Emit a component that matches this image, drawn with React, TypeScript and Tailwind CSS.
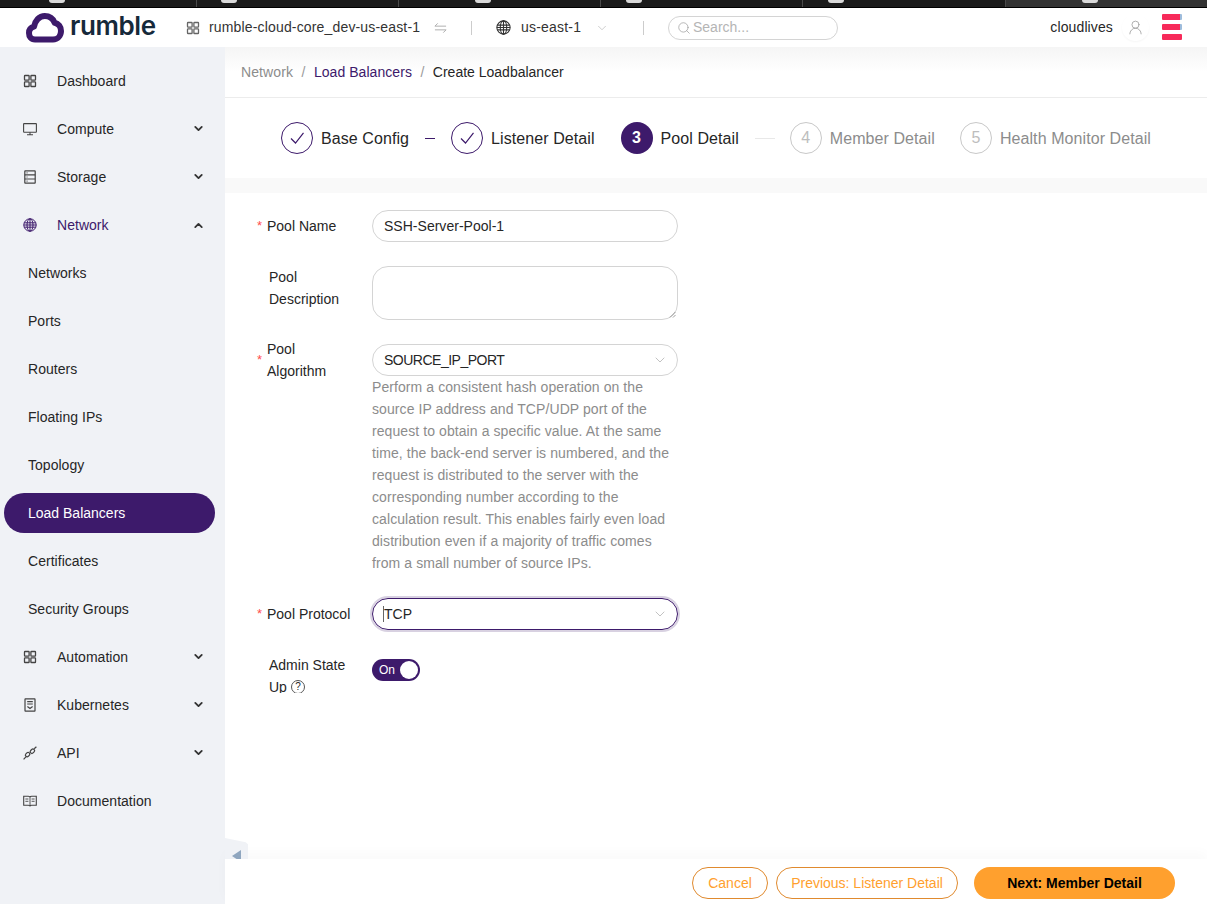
import React from "react";
import { ChevronDown, ChevronUp, Search, UserRound } from "lucide-react";

const Grid = ({ c = "" }: { c?: string }) => (
  <svg viewBox="0 0 14 14" className={c} fill="none" stroke="currentColor" strokeWidth="1.3">
    <rect x="1.5" y="1.5" width="4.6" height="4.6" rx=".6" />
    <rect x="7.9" y="1.5" width="4.6" height="4.6" rx=".6" />
    <rect x="1.5" y="7.9" width="4.6" height="4.6" rx=".6" />
    <rect x="7.9" y="7.9" width="4.6" height="4.6" rx=".6" />
  </svg>
);
const Monitor = ({ c = "" }: { c?: string }) => (
  <svg viewBox="0 0 14 14" className={c} fill="none" stroke="currentColor" strokeWidth="1.1">
    <rect x=".6" y="1.6" width="12.8" height="8.6" rx=".5" />
    <path d="M7 10.2v2.400M4 12.800h6" />
  </svg>
);
const Storage = ({ c = "" }: { c?: string }) => (
  <svg viewBox="0 0 14 14" className={c} fill="none" stroke="currentColor" strokeWidth="1.2">
    <rect x="1.8" y=".8" width="10.400" height="12.400" rx=".4" />
    <path d="M1.800 4.900h10.400M1.800 9h10.400M3.600 2.900h.9M3.600 7h.9M3.600 11.100h.9" />
  </svg>
);
const Globe = ({ c = "" }: { c?: string }) => (
  <svg viewBox="0 0 14 14" className={c} fill="none" stroke="currentColor" strokeWidth="1">
    <circle cx="7" cy="7" r="6.200" />
    <ellipse cx="7" cy="7" rx="3" ry="6.200" />
    <path d="M7 .8v12.400M1.200 4.800h11.600M1.200 9.200h11.600M.8 7h12.400" />
  </svg>
);
const Kube = ({ c = "" }: { c?: string }) => (
  <svg viewBox="0 0 14 14" className={c} fill="none" stroke="currentColor" strokeWidth="1.2">
    <rect x="2" y=".8" width="10" height="12.400" rx=".4" />
    <path d="M4.200 3.600h5.600M4.200 6h5.600M4.400 8.400 7 10.400l2.600-2" />
  </svg>
);
const Api = ({ c = "" }: { c?: string }) => (
  <svg viewBox="0 0 14 14" className={c} fill="none" stroke="currentColor" strokeWidth="1.200">
    <rect x="2.200" y="6.900" width="4.800" height="3.400" rx="1.700" transform="rotate(-45 4.600 8.600)" />
    <rect x="7" y="3.500" width="4.800" height="3.400" rx="1.700" transform="rotate(-45 9.400 5.200)" />
    <path d="M.6 13.400 2.900 10.800M11.200 2.800 13.400.8" />
  </svg>
);
const Book = ({ c = "" }: { c?: string }) => (
  <svg viewBox="0 0 14 14" className={c} fill="none" stroke="currentColor" strokeWidth="1.100">
    <path d="M.7 2.200h4.600c.9 0 1.700.5 1.700 1.200 0-.7.8-1.200 1.700-1.200h4.600v9H8.700c-.9 0-1.700.4-1.700 1.100 0-.7-.8-1.100-1.700-1.100H.7z" />
    <path d="M7 3.400v8.900M2.400 5h3M2.400 7.300h3M8.600 5h3M8.600 7.300h3" strokeWidth=".9" />
  </svg>
);

type Nav = { label: string; icon?: React.ReactNode; chevron?: "down" | "up"; state?: "open" | "active" };
const ic = "w-[14px] h-[14px]";
const nav: Nav[] = [
  { label: "Dashboard", icon: <Grid c={ic} /> },
  { label: "Compute", icon: <Monitor c={ic} />, chevron: "down" },
  { label: "Storage", icon: <Storage c={ic} />, chevron: "down" },
  { label: "Network", icon: <Globe c={ic} />, chevron: "up", state: "open" },
  { label: "Networks" },
  { label: "Ports" },
  { label: "Routers" },
  { label: "Floating IPs" },
  { label: "Topology" },
  { label: "Load Balancers", state: "active" },
  { label: "Certificates" },
  { label: "Security Groups" },
  { label: "Automation", icon: <Grid c={ic} />, chevron: "down" },
  { label: "Kubernetes", icon: <Kube c={ic} />, chevron: "down" },
  { label: "API", icon: <Api c={ic} />, chevron: "down" },
  { label: "Documentation", icon: <Book c={ic} /> },
];

function NavRow({ n }: { n: Nav }) {
  if (n.state === "active")
    return (
      <div className="h-[48px] flex items-center pl-[4px] pr-[10px]">
        <div className="h-[40px] w-full rounded-full bg-[#3d1a6b] text-white flex items-center pl-[24px]">{n.label}</div>
      </div>
    );
  const open = n.state === "open";
  return (
    <div className={`h-[48px] flex items-center ${n.icon ? "pl-[23px]" : "pl-[28px]"} pr-[20px] ${open ? "text-[#3d1a6b]" : "text-[#262626]"}`}>
      {n.icon && <span className={`w-[34px] shrink-0 ${open ? "text-[#3d1a6b]" : "text-[#444]"}`}>{n.icon}</span>}
      <span className="flex-1 tracking-[0.03px]">{n.label}</span>
      {n.chevron === "down" && <ChevronDown size={13} strokeWidth={3.4} className="text-[#333] -mt-[2px]" />}
      {n.chevron === "up" && <ChevronUp size={13} strokeWidth={3.4} className="text-[#333]" />}
    </div>
  );
}

const Tick = () => (
  <svg viewBox="0 0 16 16" className="w-[16px] h-[16px]" fill="none" stroke="currentColor" strokeWidth="1.200">
    <path d="M2 8.500 6.500 13 14.500 2.800" />
  </svg>
);

function Step({ n, label, state }: { n: number; label: string; state: "done" | "current" | "todo" }) {
  return (
    <div className="flex items-center shrink-0">
      {state === "done" && (
        <span className="w-[32px] h-[32px] rounded-full border border-[#3d1a6b] flex items-center justify-center text-[#3d1a6b]">
          <Tick />
        </span>
      )}
      {state === "current" && (
        <span className="w-[32px] h-[32px] rounded-full bg-[#3d1a6b] text-white text-[16px] font-bold flex items-center justify-center">{n}</span>
      )}
      {state === "todo" && (
        <span className="w-[32px] h-[32px] rounded-full border border-[#c8c8c8] text-[#bdbdbd] text-[16px] flex items-center justify-center">{n}</span>
      )}
      <span className={`ml-[8px] text-[16px] tracking-[0.08px] pt-px ${state === "todo" ? "text-[#8c8c8c]" : "text-[#262626]"}`}>{label}</span>
    </div>
  );
}

function Label({ req, children, cls = "" }: { req?: boolean; children: React.ReactNode; cls?: string }) {
  return (
    <div className={`w-[147px] pl-[32px] shrink-0 flex ${cls}`}>
      <span className={`w-[10px] shrink-0 text-[#ff4d4f] text-[13px] ${req ? "" : "invisible"}`}>*</span>
      <span className={`leading-[22px] text-[#262626] ${req ? "" : "ml-[2px]"}`}>{children}</span>
    </div>
  );
}

const Arrow = () => <ChevronDown size={16} strokeWidth={0.9} className="text-[#999]" />;

const tabs = [
  { w: 197, m: 49 },
  { w: 202, m: 24 },
  { w: 202, m: 76 },
  { w: 202, m: 25 },
  { w: 203, m: 25 },
];

export default function App() {
  return (
    <div className="w-full h-screen overflow-hidden flex flex-col bg-white text-[14px] text-[#262626] font-['Liberation_Sans',Arial,sans-serif]">
      {/* browser tabs */}
      <div className="h-[8px] shrink-0 bg-[#1b1b1b] border-b border-black flex">
        {tabs.map((t, i) => (
          <div key={i} style={{ width: t.w, paddingLeft: t.m }} className="h-full border-r border-[#4a4a4a] flex">
            <span className="w-[16px] h-[3px] rounded-b bg-[#d9d9d9]" />
          </div>
        ))}
        <div className="flex-1 h-full bg-[#333] flex pl-[76px]">
          <span className="w-[16px] h-[3px] rounded-b bg-[#d9d9d9]" />
        </div>
      </div>

      {/* header */}
      <header className="h-[39px] shrink-0 bg-white flex items-center relative z-10">
        <svg viewBox="0 0 38 30" className="w-[38px] h-[30px] ml-[26px] shrink-0">
          <path
            d="M9 26.500C5 26.500 3 23.500 3 20c0-3.200 2-5.600 5-6.300C9 7.800 13.200 3 18.800 3c4.600 0 8.200 2.700 9.900 6.800C32.500 10.600 35 13.800 35 18c0 4.800-3.400 8.500-8 8.500z"
            fill="#fff"
            stroke="#3d1a6b"
            strokeWidth="6"
            strokeLinejoin="round"
          />
        </svg>
        <span className="ml-[6px] w-[86px] text-[26px] leading-none font-semibold text-[#16293a] font-['Inter',sans-serif] tracking-[-0.4px] -mt-[3px] shrink-0">rumble</span>
        <Grid c="w-[14px] h-[14px] ml-[30px] text-[#666] shrink-0" />
        <span className="ml-[9px] text-[#333] whitespace-nowrap w-[211px] shrink-0 tracking-[0.16px]">rumble-cloud-core_dev-us-east-1</span>
        <svg viewBox="0 0 14 12" className="w-[13px] h-[12px] ml-[14px] text-[#aaa] shrink-0" fill="none" stroke="currentColor" strokeWidth="1">
          <path d="M1 4h12M1 4l3-3M13 8H1M13 8l-3 3" />
        </svg>
        <span className="w-px h-[14px] bg-[#ccc] ml-[24px] shrink-0" />
        <Globe c="w-[15px] h-[15px] ml-[24px] text-[#333] shrink-0" />
        <span className="ml-[10px] w-[60px] shrink-0 text-[#333] tracking-[0.2px] whitespace-nowrap">us-east-1</span>
        <ChevronDown size={14} strokeWidth={1} className="ml-[14px] text-[#aaa] shrink-0" />
        <span className="w-px h-[14px] bg-[#ccc] ml-[34px] shrink-0" />
        <div className="ml-[24px] w-[170px] h-[24px] rounded-full border border-[#d4d4d4] flex items-center pl-[8px] text-[#b5b5b5] shrink-0">
          <Search size={14} strokeWidth={1.2} className="text-[#999]" />
          <span className="ml-[2px]">Search...</span>
        </div>
        <span className="ml-auto text-[#262626] tracking-[0.12px]">cloudlives</span>
        <span className="ml-[9px] w-[27px] h-[27px] rounded-full shadow-[0_1px_2px_rgba(0,0,0,0.04)] flex items-center justify-center shrink-0">
          <UserRound size={17} strokeWidth={1.1} className="text-[#999]" />
        </span>
        <div className="ml-[13px] mr-[25px] w-[20px] flex flex-col gap-[4px] -mt-[1px] shrink-0">
          <span className="h-[6px] bg-[#f72a5a] rounded-[1px] border-r-2 border-[#9dbcdc]" />
          <span className="h-[6px] bg-[#f72a5a] rounded-[1px] border-r-2 border-[#9dbcdc]" />
          <span className="h-[6px] bg-[#f72a5a] rounded-[1px]" />
        </div>
      </header>

      <div className="flex-1 min-h-0 flex">
        {/* sidebar */}
        <aside className="w-[225px] shrink-0 bg-[#f0f2f6] pt-[10px]">
          {nav.map((n) => (
            <NavRow key={n.label} n={n} />
          ))}
        </aside>

        {/* main */}
        <main className="flex-1 min-w-0 flex flex-col relative">
          <div className="h-[51px] shrink-0 border-b border-[#ececec] flex items-center pl-[16px] bg-gradient-to-b from-[#f5f5f5] via-white to-white">
            <span className="text-[#8c8c8c] tracking-[0.1px]">Network</span>
            <span className="mx-[8.500px] text-[#9a9a9a]">/</span>
            <span className="text-[#3d1a6b] tracking-[0.05px]">Load Balancers</span>
            <span className="mx-[8.500px] text-[#9a9a9a]">/</span>
            <span>Create Loadbalancer</span>
          </div>

          <div className="h-[80px] shrink-0 flex items-center pl-[56px]">
            <Step n={1} label="Base Config" state="done" />
            <span className="w-[10px] h-px bg-[#3d1a6b] mx-[16px] shrink-0" />
            <Step n={2} label="Listener Detail" state="done" />
            <span className="w-[26px] shrink-0" />
            <Step n={3} label="Pool Detail" state="current" />
            <span className="w-[20px] h-px bg-[#e8e8e8] ml-[16px] mr-[15px] shrink-0" />
            <Step n={4} label="Member Detail" state="todo" />
            <span className="w-[25px] shrink-0" />
            <Step n={5} label="Health Monitor Detail" state="todo" />
          </div>

          <div className="h-[15px] shrink-0 bg-[#f9f9f9]" />

          <form className="flex-1 min-h-0 pt-[17px]">
            <div className="flex h-[32px] items-center">
              <Label req cls="items-center">Pool Name</Label>
              <div className="w-[306px] h-[32px] rounded-full border border-[#d4d4d4] flex items-center px-[11px] tracking-[0.02px]">SSH-Server-Pool-1</div>
            </div>

            <div className="flex mt-[24px] h-[54px] items-start">
              <Label>
                Pool
                <br />
                Description
              </Label>
              <div className="w-[306px] h-[54px] rounded-[16px] border border-[#d4d4d4] relative">
                <svg viewBox="0 0 8 8" className="absolute right-[1px] bottom-[1px] w-[7px] h-[7px] text-[#777]" fill="none" stroke="currentColor" strokeWidth=".8">
                  <path d="M1 7.500 7.500 1M4.500 7.500 7.500 4.500" />
                </svg>
              </div>
            </div>

            <div className="flex mt-[24px] items-start">
              <Label req cls="h-[32px] items-center">
                Pool
                <br />
                Algorithm
              </Label>
              <div className="w-[306px]">
                <div className="h-[32px] rounded-full border border-[#d4d4d4] flex items-center justify-between pl-[11px] pr-[9px]">
                  <span className="tracking-[-0.5px]">SOURCE_IP_PORT</span>
                  <Arrow />
                </div>
                <p className="leading-[22px] text-[#8c8c8c] w-[306px] tracking-[0.08px]">
                  Perform a consistent hash operation on the source IP address and TCP/UDP port of the request to obtain a specific value. At the same time, the back-end server is numbered, and the request is distributed to the server with the corresponding number according to the calculation result. This enables fairly even load distribution even if a majority of traffic comes from a small number of source IPs.
                </p>
              </div>
            </div>

            <div className="flex mt-[24px] h-[32px] items-center">
              <Label req cls="items-center">Pool Protocol</Label>
              <div className="w-[306px] h-[32px] rounded-full border border-[#3d1a6b] shadow-[0_0_0_2px_rgba(61,26,107,0.2)] flex items-center justify-between pl-[11px] pr-[9px]">
                <span className="border-l border-[#666] leading-[16px] -ml-px">TCP</span>
                <Arrow />
              </div>
            </div>

            <div className="flex mt-[24px] items-start">
              <Label cls="h-[39px] overflow-hidden">
                Admin State
                <br />
                <span className="inline-flex items-center gap-[4px]">
                  Up
                  <span className="w-[14px] h-[14px] rounded-full border border-[#555] text-[10px] leading-none flex items-center justify-center">?</span>
                </span>
              </Label>
              <div className="w-[48px] h-[22px] mt-[5px] rounded-full bg-[#3d1a6b] flex items-center justify-between pl-[7px] pr-[2px] text-white text-[12px] font-medium">
                <span>On</span>
                <span className="w-[18px] h-[18px] rounded-full bg-white" />
              </div>
            </div>
          </form>

          <footer className="h-[45px] shrink-0 bg-white flex items-center justify-end gap-[8px] pr-[32px] pt-[3px] shadow-[0_-6px_12px_rgba(0,0,0,0.025)] relative">
            <button type="button" className="w-[76px] h-[32px] rounded-full border border-[#e08a2e] text-[#ffa02e]">Cancel</button>
            <button type="button" className="w-[182px] h-[32px] rounded-full border border-[#e08a2e] text-[#ffa02e]">Previous: Listener Detail</button>
            <button type="button" className="ml-[8px] w-[201px] h-[32px] rounded-full bg-[#ffa02e] text-black font-bold">Next: Member Detail</button>
          </footer>

          {/* collapse handle */}
          <div className="absolute left-0 bottom-[45px] w-[23px] h-[21px] bg-[#f0f2f6] [clip-path:polygon(0_0,90%_20%,100%_30%,100%_100%,0_100%)] flex items-end pl-[7px]">
            <span className="w-0 h-0 border-y-[6px] border-y-transparent border-r-[9px] border-r-[#8fa6bf] -mb-[3px] shrink-0" />
          </div>
        </main>
      </div>
    </div>
  );
}
